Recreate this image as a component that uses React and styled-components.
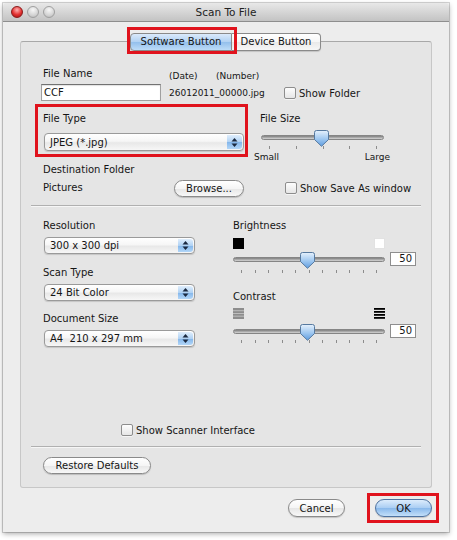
import React, { useId } from "react";
import styled, { createGlobalStyle } from "styled-components";

const GlobalStyle = createGlobalStyle`
  html, body { margin: 0; padding: 0; background: #ffffff; }
  body {
    font-family: "DejaVu Sans", "Liberation Sans", sans-serif;
    font-size: 10px;
    color: #151515;
  }
  * { box-sizing: border-box; }
`;

const Stage = styled.div`
  width: 457px;
  height: 540px;
  padding: 3px 0 0 3px;
  overflow: hidden;
`;

const Window = styled.div`
  width: 446px;
  height: 529px;
  background: #ededed;
  display: flex;
  flex-direction: column;
  box-shadow: 0 0 0 1px rgba(0, 0, 0, 0.16), 0 2px 5px rgba(0, 0, 0, 0.32);
`;

const TitleBar = styled.div`
  height: 19px;
  flex: none;
  display: flex;
  align-items: center;
  background: linear-gradient(#e8e8e8, #c3c3c3);
  border-bottom: 1px solid #8e8e8e;
  border-radius: 4px 4px 0 0;
`;

const Lights = styled.div`
  width: 70px;
  display: flex;
  gap: 4px;
  padding-left: 8px;
`;

const Light = styled.span`
  width: 12px;
  height: 12px;
  border-radius: 50%;
  background: ${(p) =>
    p.$red
      ? "radial-gradient(circle at 50% 30%, #ffb0b0, #e23030 55%, #9e1010)"
      : "radial-gradient(circle at 50% 30%, #f7f7f7, #d4d4d4 60%, #b3b3b3)"};
  border: 1px solid ${(p) => (p.$red ? "#8a1a1a" : "#a0a0a0")};
`;

const Title = styled.div`
  flex: 1;
  text-align: center;
  font-size: 10.5px;
  color: #222;
`;

const TitleSpacer = styled.div`
  width: 70px;
`;

const TabRow = styled.div`
  display: flex;
  margin: 11px 0 -10px 127px;
  position: relative;
  z-index: 2;
`;

const Tab = styled.div`
  height: 18px;
  width: ${(p) => p.$w}px;
  line-height: 16px;
  text-align: center;
  font-size: 10px;
  border: 1px solid #8a8a8a;
  ${(p) => !p.$first && "border-left: none;"}
  border-radius: ${(p) => (p.$first ? "4px 0 0 4px" : "0 4px 4px 0")};
  background: ${(p) =>
    p.$active
      ? "linear-gradient(#dbeafb, #b0d1f3 50%, #93bfec 51%, #bddcf8)"
      : "linear-gradient(#ffffff, #f6f6f6 50%, #e9e9e9 51%, #f7f7f7)"};
  box-shadow: 0 1px 1px rgba(0, 0, 0, 0.15);
`;

const Marked = styled.div`
  position: relative;
  &::after {
    content: "";
    position: absolute;
    pointer-events: none;
    top: ${(p) => -p.$t}px;
    right: ${(p) => -p.$r}px;
    bottom: ${(p) => -p.$b}px;
    left: ${(p) => -p.$l}px;
    border: 3px solid #e0131d;
    z-index: 3;
  }
`;

const Panel = styled.div`
  margin-left: 17px;
  width: 412px;
  height: 447px;
  flex: none;
  background: #e5e5e5;
  border: 1px solid #c7c7c7;
  border-top-color: #a8a8a8;
  border-radius: 3px;
  display: flex;
  flex-direction: column;
  padding: 24px 10px 13px 10px;
`;

const Row = styled.div`
  display: flex;
  align-items: ${(p) => p.$align || "flex-start"};
  height: ${(p) => p.$h}px;
  margin-top: ${(p) => p.$mt || 0}px;
  flex: none;
`;

const Column = styled.div`
  display: flex;
  flex-direction: column;
  width: ${(p) => p.$w}px;
  margin-left: ${(p) => p.$ml || 0}px;
  margin-top: ${(p) => p.$mt || 0}px;
  flex: none;
`;

const Label = styled.div`
  height: 16px;
  line-height: 16px;
  font-size: 10px;
  white-space: nowrap;
  padding-left: ${(p) => p.$indent || 0}px;
  margin-left: ${(p) => p.$ml || 0}px;
  margin-top: ${(p) => p.$mt || 0}px;
  width: ${(p) => (p.$w ? `${p.$w}px` : "auto")};
  flex: none;
`;

const TextInput = styled.div`
  margin-top: 2px;
  height: 17px;
  width: 120px;
  background: #ffffff;
  border: 1px solid #a0a0a0;
  border-top-color: #727272;
  box-shadow: inset 0 1px 1px rgba(0, 0, 0, 0.12);
  padding-left: 2px;
  line-height: 15px;
  font-size: 10px;
`;

const SmallLine = styled.div`
  display: flex;
  height: 14px;
  line-height: 14px;
  font-size: 9px;
  margin-top: ${(p) => p.$mt || 0}px;
  white-space: nowrap;
`;

const SmallCell = styled.span`
  width: ${(p) => p.$w}px;
`;

const CheckField = styled.div`
  display: flex;
  align-items: center;
  gap: 3px;
  height: 14px;
  margin-left: ${(p) => p.$ml || 0}px;
  margin-top: ${(p) => p.$mt || 0}px;
  font-size: 10px;
  white-space: nowrap;
  flex: none;
`;

const CheckBox = styled.span`
  width: 12px;
  height: 12px;
  flex: none;
  border: 1px solid #8d8d8d;
  border-radius: 2px;
  background: linear-gradient(#fdfdfd, #e6e6e6);
  box-shadow: 0 1px 0 rgba(255, 255, 255, 0.6);
`;

const RedFrame = styled.div`
  margin-left: 4px;
  width: 213px;
  height: 53px;
  border: 3px solid #e0131d;
  padding: 4px 1px 0 5px;
  display: flex;
  flex-direction: column;
  flex: none;
`;

const PopupBox = styled.div`
  display: flex;
  align-items: center;
  width: ${(p) => p.$w}px;
  height: ${(p) => p.$h || 17}px;
  margin-left: 1px;
  margin-top: ${(p) => p.$mt || 3}px;
  border: 1px solid #9a9a9a;
  border-radius: 4px;
  background: linear-gradient(#ffffff, #f6f6f6 45%, #e8e8e8 55%, #f7f7f7);
  box-shadow: 0 1px 1px rgba(0, 0, 0, 0.14);
  padding-left: 5px;
  flex: none;
`;

const PopupText = styled.span`
  flex: 1;
  font-size: 10px;
  white-space: pre;
`;

const Stepper = styled.span`
  width: 15px;
  align-self: stretch;
  margin: 1px;
  border-radius: 0 3px 3px 0;
  background: linear-gradient(#e0eefc, #b0d2f4 50%, #82b5ea 51%, #b2d6f8);
  display: flex;
  align-items: center;
  justify-content: center;
`;

const SliderWrap = styled.div`
  position: relative;
  width: ${(p) => p.$w}px;
  margin-left: ${(p) => p.$ml || 0}px;
  margin-top: ${(p) => p.$mt || 0}px;
  flex: none;
`;

const TrackArea = styled.div`
  height: 16px;
  display: flex;
  align-items: center;
`;

const Track = styled.div`
  flex: 1;
  height: 5px;
  border-radius: 3px;
  background: linear-gradient(#7e7e7e, #a9a9a9 50%, #d6d6d6);
  border: 1px solid #858585;
`;

const Thumb = styled.div`
  position: absolute;
  top: 1px;
  width: 15px;
  height: 17px;
  display: flex;
`;

const Ticks = styled.div`
  display: flex;
  justify-content: space-between;
  padding: 0 ${(p) => p.$ri}px 0 ${(p) => p.$li}px;
  margin-top: ${(p) => p.$mt || 1}px;
`;

const Tick = styled.span`
  width: 1px;
  height: 3px;
  background: #8c8c8c;
`;

const SizeLabels = styled.div`
  display: flex;
  justify-content: space-between;
  font-size: 9px;
  line-height: 12px;
  height: 12px;
  margin-top: 2px;
`;

const PushButton = styled.button`
  width: ${(p) => p.$w}px;
  height: ${(p) => p.$h || 17}px;
  margin-left: ${(p) => p.$ml || 0}px;
  margin-top: ${(p) => p.$mt || 0}px;
  padding: 0;
  border-radius: 9px;
  font-family: inherit;
  font-size: 10px;
  color: #151515;
  display: flex;
  align-items: center;
  justify-content: center;
  flex: none;
  border: 1px solid ${(p) => (p.$default ? "#4e72a0" : "#8a8a8a")};
  background: ${(p) =>
    p.$default
      ? "linear-gradient(#dcecfc, #a9cdf3 50%, #88b8eb 51%, #c3dff9)"
      : "linear-gradient(#ffffff, #f5f5f5 50%, #e6e6e6 51%, #f8f8f8)"};
  box-shadow: 0 1px 1px rgba(0, 0, 0, 0.18);
`;

const Separator = styled.div`
  height: 1px;
  flex: none;
  background: #b0b0b0;
  box-shadow: 0 1px 0 #f6f6f6;
  margin-top: ${(p) => p.$mt || 0}px;
`;

const Columns = styled.div`
  display: flex;
  margin-top: 12px;
  flex: none;
`;

const IconRow = styled.div`
  display: flex;
  justify-content: space-between;
  width: 152px;
  height: 11px;
  margin-top: ${(p) => p.$mt || 0}px;
`;

const Swatch = styled.span`
  width: 11px;
  height: 11px;
  background: ${(p) => p.$c};
  border: 1px solid ${(p) => p.$border};
`;

const SliderRow = styled.div`
  display: flex;
  align-items: flex-start;
  margin-top: ${(p) => p.$mt || 0}px;
`;

const ValueBox = styled.div`
  width: 26px;
  height: 14px;
  margin-left: 5px;
  margin-top: 1px;
  background: #ffffff;
  border: 1px solid #8e8e8e;
  text-align: right;
  padding-right: 3px;
  line-height: 12px;
  font-size: 10px;
`;

const Spacer = styled.div`
  flex: 1;
`;

const ButtonRow = styled.div`
  display: flex;
  justify-content: flex-end;
  gap: 30px;
  padding-right: 17px;
  margin-top: 11px;
`;

function Arrows() {
  return (
    <svg width="7" height="11" viewBox="0 0 7 11">
      <path d="M0.5 4.5 L3.5 1 L6.5 4.5 Z" fill="#1b2940" />
      <path d="M0.5 6.5 L3.5 10 L6.5 6.5 Z" fill="#1b2940" />
    </svg>
  );
}

function Popup({ w, h, mt, children }) {
  return (
    <PopupBox $w={w} $h={h} $mt={mt}>
      <PopupText>{children}</PopupText>
      <Stepper>
        <Arrows />
      </Stepper>
    </PopupBox>
  );
}

function ThumbShape() {
  const id = useId().replace(/:/g, "");
  return (
    <svg width="15" height="17" viewBox="0 0 15 17">
      <defs>
        <linearGradient id={`g${id}`} x1="0" y1="0" x2="0" y2="1">
          <stop offset="0" stopColor="#e6f1fc" />
          <stop offset="0.5" stopColor="#a3caf1" />
          <stop offset="1" stopColor="#5f9de0" />
        </linearGradient>
      </defs>
      <path
        d="M2.5 0.5 H12.5 Q14.5 0.5 14.5 2.5 V9.5 L7.5 16.3 L0.5 9.5 V2.5 Q0.5 0.5 2.5 0.5 Z"
        fill={`url(#g${id})`}
        stroke="#56799f"
      />
    </svg>
  );
}

function Slider({ w, ml, mt, value, ticks, li, ri, tickGap }) {
  return (
    <SliderWrap $w={w} $ml={ml} $mt={mt}>
      <TrackArea>
        <Track />
      </TrackArea>
      <Thumb style={{ left: `calc(${value}% - 7.5px)` }}>
        <ThumbShape />
      </Thumb>
      <Ticks $li={li} $ri={ri} $mt={tickGap}>
        {Array.from({ length: ticks }).map((_, i) => (
          <Tick key={i} />
        ))}
      </Ticks>
    </SliderWrap>
  );
}

function LowContrastIcon() {
  return (
    <svg width="11" height="11" viewBox="0 0 11 11">
      <rect x="0" y="0" width="11" height="11" fill="#8d8d8d" />
      <rect x="0" y="2.3" width="11" height="0.9" fill="#c4c4c4" />
      <rect x="0" y="5" width="11" height="0.9" fill="#c4c4c4" />
      <rect x="0" y="7.7" width="11" height="0.9" fill="#c4c4c4" />
    </svg>
  );
}

function HighContrastIcon() {
  return (
    <svg width="11" height="11" viewBox="0 0 11 11">
      <rect x="0" y="0" width="11" height="1.8" fill="#000" />
      <rect x="0" y="3" width="11" height="1.8" fill="#000" />
      <rect x="0" y="6" width="11" height="1.8" fill="#000" />
      <rect x="0" y="9" width="11" height="1.8" fill="#000" />
    </svg>
  );
}

export default function App() {
  return (
    <>
      <GlobalStyle />
      <Stage>
        <Window>
          <TitleBar>
            <Lights>
              <Light $red />
              <Light />
              <Light />
            </Lights>
            <Title>Scan To File</Title>
            <TitleSpacer />
          </TitleBar>

          <TabRow>
            <Marked $t={6} $r={5} $b={3} $l={3}>
              <Tab $w={102} $first $active>
                Software Button
              </Tab>
            </Marked>
            <Tab $w={89}>Device Button</Tab>
          </TabRow>

          <Panel>
            <Row $h={36}>
              <Column $w={120} $ml={10}>
                <Label $indent={2}>File Name</Label>
                <TextInput>CCF</TextInput>
              </Column>
              <Column $w={115} $ml={8} $mt={3}>
                <SmallLine>
                  <SmallCell $w={47}>(Date)</SmallCell>
                  <span>(Number)</span>
                </SmallLine>
                <SmallLine $mt={3}>26012011_00000.jpg</SmallLine>
              </Column>
              <CheckField $mt={20}>
                <CheckBox />
                Show Folder
              </CheckField>
            </Row>

            <Row $h={53} $mt={2}>
              <RedFrame>
                <Label>File Type</Label>
                <Popup w={200} h={18} mt={6}>
                  JPEG (*.jpg)
                </Popup>
              </RedFrame>
              <Column $w={136} $ml={6}>
                <Label $indent={6} $mt={7}>
                  File Size
                </Label>
                <Slider w={123} ml={7} mt={2} value={49} ticks={5} li={8} ri={7} />
                <SizeLabels>
                  <span>Small</span>
                  <span>Large</span>
                </SizeLabels>
              </Column>
            </Row>

            <Label $ml={12} $mt={5}>
              Destination Folder
            </Label>
            <Row $h={18} $mt={1} $align="center">
              <Label $ml={12} $w={131}>
                Pictures
              </Label>
              <PushButton $w={70}>Browse...</PushButton>
              <CheckField $ml={41}>
                <CheckBox />
                Show Save As window
              </CheckField>
            </Row>

            <Separator $mt={8} />

            <Columns>
              <Column $w={152} $ml={12}>
                <Label>Resolution</Label>
                <Popup w={151}>300 x 300 dpi</Popup>
                <Label $mt={11}>Scan Type</Label>
                <Popup w={151}>24 Bit Color</Popup>
                <Label $mt={10}>Document Size</Label>
                <Popup w={151}>A4  210 x 297 mm</Popup>
              </Column>
              <Column $w={183} $ml={38}>
                <Label>Brightness</Label>
                <IconRow $mt={4}>
                  <Swatch $c="#000000" $border="#000000" />
                  <Swatch $c="#ffffff" $border="#e2e2e2" />
                </IconRow>
                <SliderRow $mt={2}>
                  <Slider w={152} value={49} ticks={11} li={8} ri={8} tickGap={3} />
                  <ValueBox>50</ValueBox>
                </SliderRow>
                <Label $mt={16}>Contrast</Label>
                <IconRow $mt={3}>
                  <LowContrastIcon />
                  <HighContrastIcon />
                </IconRow>
                <SliderRow $mt={4}>
                  <Slider w={152} value={49} ticks={11} li={8} ri={8} tickGap={1} />
                  <ValueBox>50</ValueBox>
                </SliderRow>
              </Column>
            </Columns>

            <Spacer />

            <CheckField $ml={90}>
              <CheckBox />
              Show Scanner Interface
            </CheckField>
            <Separator $mt={9} />
            <PushButton $w={108} $ml={12} $mt={10}>
              Restore Defaults
            </PushButton>
          </Panel>

          <ButtonRow>
            <PushButton $w={57} $h={18}>
              Cancel
            </PushButton>
            <Marked $t={6} $r={7} $b={6} $l={8}>
              <PushButton $w={57} $h={18} $default>
                OK
              </PushButton>
            </Marked>
          </ButtonRow>
        </Window>
      </Stage>
    </>
  );
}
